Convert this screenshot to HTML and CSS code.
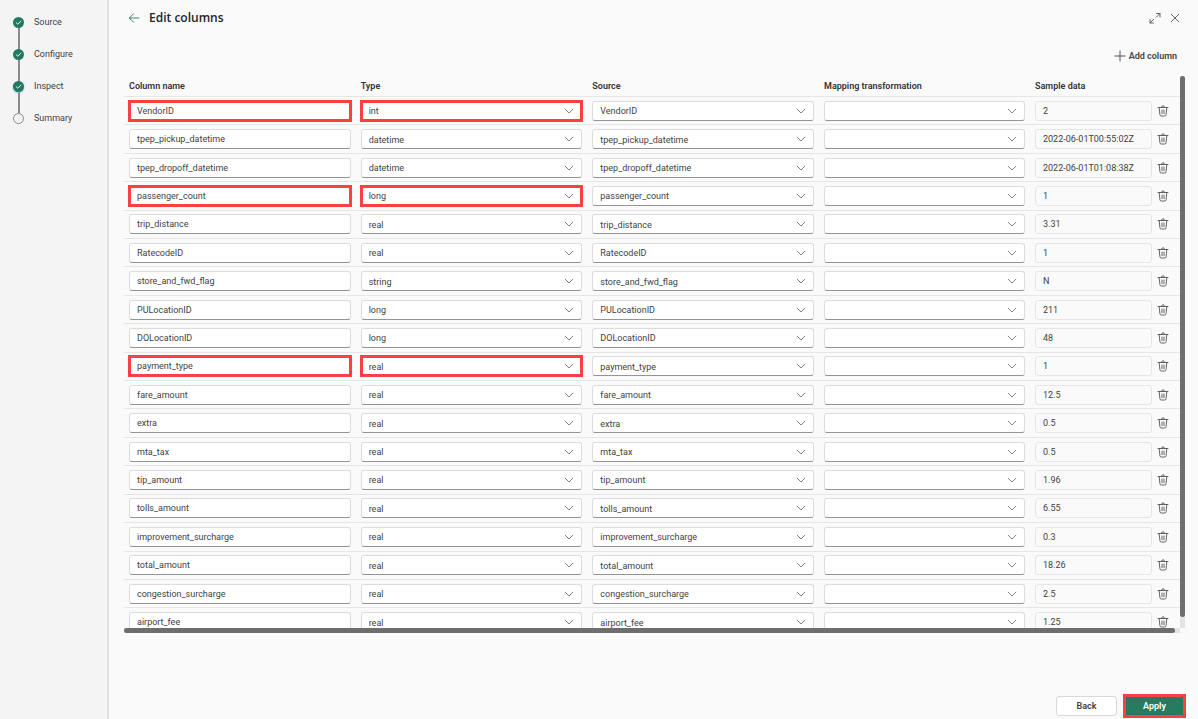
FILE: index.html
```html
<!DOCTYPE html>
<html lang="en">
<head>
<meta charset="utf-8">
<title>Edit columns</title>
<link rel="stylesheet" href="styles.css">
</head>
<body>
<svg class="sprite" aria-hidden="true">
  <symbol id="chevron" viewBox="0 0 10 10"><path d="M1.2 3.2 5 7l3.8-3.8"/></symbol>
  <symbol id="check" viewBox="0 0 11 11"><path d="m3.2 5.7 1.6 1.5 3.1-3.1"/></symbol>
  <symbol id="trash" viewBox="0 0 12 12"><path d="M1 2.5h10M4.5 2.3a1.5 1.5 0 0 1 3 0M2.2 2.7l.7 7c.1.9.6 1.3 1.4 1.3h3.4c.8 0 1.300-.4 1.400-1.300l.7-7M5 5v3.700M7 5v3.700"/></symbol>
</svg>
<div class="app">
  <nav class="steps" aria-label="Progress">
    <ol class="step-list">
      <li class="step"><span class="dot"><svg class="check"><use href="#check"/></svg></span>Source</li>
      <li class="step"><span class="dot"><svg class="check"><use href="#check"/></svg></span>Configure</li>
      <li class="step"><span class="dot dot-current"><svg class="check"><use href="#check"/></svg></span>Inspect</li>
      <li class="step"><span class="dot dot-open"></span>Summary</li>
    </ol>
  </nav>
  <main class="main">
    <header class="header">
      <button class="icon-button back-arrow" aria-label="Go back"><svg class="icon" viewBox="0 0 12 12"><path d="M11 6H1.500M5.500 1.800 1.300 6l4.200 4.200"/></svg></button>
      <h1 class="title">Edit columns</h1>
      <button class="icon-button" aria-label="Expand"><svg class="icon" viewBox="0 0 12 12"><path d="M7.500 1.500h3.500v3.500M11 1.500 7.200 5.300M4.500 11H1V7.500M1 11l3.800-3.800"/></svg></button>
      <button class="icon-button" aria-label="Close"><svg class="icon" viewBox="0 0 12 12"><path d="m2.200 2.200 7.600 7.600M9.800 2.200 2.200 9.800"/></svg></button>
    </header>
    <div class="toolbar">
      <button class="add"><svg class="icon" viewBox="0 0 12 12"><path d="M6 1v10M1 6h10"/></svg>Add column</button>
    </div>
    <section class="viewport">
      <div class="scroll">
        <table class="columns">
          <colgroup><col><col><col><col class="col-mapping"><col class="col-sample"><col class="col-action"></colgroup>
          <thead>
            <tr><th>Column name</th><th>Type</th><th>Source</th><th>Mapping transformation</th><th>Sample data</th><td></td></tr>
          </thead>
          <tbody id="rows"></tbody>
        </table>
      </div>
      <div class="track track-y"><div class="thumb thumb-y"></div></div>
      <div class="track track-x"><div class="thumb thumb-x"></div></div>
    </section>
    <footer class="footer">
      <button class="button">Back</button>
      <button class="button button-primary marked">Apply</button>
    </footer>
  </main>
</div>
<script src="script.js"></script>
</body>
</html>
```
FILE: styles.css
```css
* { box-sizing: border-box; }
body {
  margin: 0;
  font: 9px/12px Roboto, "Open Sans", sans-serif;
  color: #424242;
  background: #fafafa;
}
button, input, select { font: inherit; color: inherit; margin: 0; }
button { border: 0; padding: 0; background: none; }
svg { fill: none; stroke: currentColor; stroke-width: 0.9; stroke-linecap: round; stroke-linejoin: round; }
.sprite { position: absolute; width: 0; height: 0; }

.app { display: flex; height: 100vh; overflow: hidden; }
.steps {
  flex: none;
  width: 109px;
  padding: 6px 13px;
  background: #f4f4f4;
  border-right: 2px solid #e0e0e0;
}
.step-list { margin: 0; padding: 0; list-style: none; }
.step {
  display: flex;
  align-items: center;
  gap: 10px;
  height: 32px;
  background: linear-gradient(#8a8a8a, #8a8a8a) 5px 0 / 2px 100% no-repeat;
}
.step:first-child { background-position: 5px 16px; }
.step:last-child { background-size: 2px 11px; }
.dot {
  display: flex;
  width: 11px;
  height: 11px;
  border-radius: 50%;
  background: #217a5f;
  color: #fff;
}
.dot-current { box-shadow: 0 1px 2px #8ab8e6; }
.dot-open { background: #f4f4f4; border: 1px solid #8a8a8a; }
.check { width: 11px; height: 11px; }

.main { flex: 1; min-width: 0; display: flex; flex-direction: column; padding: 8px 13px 3px 15px; }
.header { display: flex; align-items: center; gap: 8px; height: 19px; padding: 0 4px; }
.title { flex: 1; margin: 0; font: 600 12px/16px "Open Sans", sans-serif; color: #242424; }
.icon-button { display: flex; color: #555; }
.icon { width: 12px; height: 12px; }
.back-arrow { color: #217a5f; margin-right: 1px; }
.toolbar { display: flex; justify-content: flex-end; padding: 21px 8px 12px; }
.add { display: flex; align-items: center; gap: 3px; height: 16px; font-weight: 600; }

.viewport {
  flex: 1;
  min-height: 0;
  display: grid;
  grid-template: minmax(0, 1fr) 5px / minmax(0, 1fr) 5px;
}
.scroll { overflow: hidden; }
.track { background: #e4e4e4; }
.thumb { background: #6e6e6e; border-radius: 3px; }
.thumb-y { height: 98%; }
.thumb-x { margin-right: 5px; height: 100%; }

.columns { width: 100%; height: 561px; table-layout: fixed; border-collapse: separate; border-spacing: 0; }
.columns th, .columns td { padding: 0 5px; border-bottom: 1px solid #e6e6e6; text-align: left; vertical-align: middle; }
.columns thead tr { height: 21px; }
.columns th { font-weight: 600; color: #333; }
.columns td.action { padding: 0; }
.col-mapping { width: 211px; }
.col-sample { width: 127px; }
.col-action { width: 23px; }

.field, .picker-select {
  display: block;
  width: 100%;
  height: 20px;
  padding: 0 7px;
  background: #fff;
  border: 1px solid #dcdcdc;
  border-bottom-color: #949494;
  border-radius: 3px;
}
.field-readonly { background: #fafafa; border-color: #e6e6e6; }
.picker { display: grid; grid-template-columns: minmax(0, 1fr) 18px; align-items: center; }
.picker-select { grid-area: 1 / 1 / 2 / 3; padding-top: 1px; appearance: none; }
.chevron { grid-area: 1 / 2; width: 10px; height: 10px; color: #777; pointer-events: none; }
.delete { display: block; color: #555; }
.trash { display: block; width: 12px; height: 12px; }
.marked { outline: 3px solid #fa4141; outline-offset: -2px; border-radius: 0; }

.footer { display: flex; justify-content: flex-end; align-items: center; gap: 8px; padding: 63px 1px 0 0; }
.button {
  width: 61px;
  height: 20px;
  border: 1px solid #d8d8d8;
  border-radius: 3px;
  background: #fff;
  font-weight: 600;
}
.button-primary { width: 59px; border: 0; border-radius: 0; background: #287a60; color: #fff; outline-offset: -1px; }
```
FILE: script.js
```js
const columns = [
  ["VendorID", "int", "2", true],
  ["tpep_pickup_datetime", "datetime", "2022-06-01T00:55:02Z"],
  ["tpep_dropoff_datetime", "datetime", "2022-06-01T01:08:38Z"],
  ["passenger_count", "long", "1", true],
  ["trip_distance", "real", "3.31"],
  ["RatecodeID", "real", "1"],
  ["store_and_fwd_flag", "string", "N"],
  ["PULocationID", "long", "211"],
  ["DOLocationID", "long", "48"],
  ["payment_type", "real", "1", true],
  ["fare_amount", "real", "12.5"],
  ["extra", "real", "0.5"],
  ["mta_tax", "real", "0.5"],
  ["tip_amount", "real", "1.96"],
  ["tolls_amount", "real", "6.55"],
  ["improvement_surcharge", "real", "0.3"],
  ["total_amount", "real", "18.26"],
  ["congestion_surcharge", "real", "2.5"],
  ["airport_fee", "real", "1.25"]
];

const picker = (label, value, mark = "") => `
  <td><div class="picker">
    <select class="picker-select ${mark}" aria-label="${label}"><option>${value}</option></select>
    <svg class="chevron"><use href="#chevron"/></svg>
  </div></td>`;

document.getElementById("rows").innerHTML = columns.map(([name, type, sample, marked]) => {
  const mark = marked ? "marked" : "";
  return `<tr>
    <td><input class="field ${mark}" aria-label="Column name" value="${name}"></td>
    ${picker("Type of " + name, type, mark)}
    ${picker("Source of " + name, name)}
    ${picker("Mapping transformation of " + name, "")}
    <td><input class="field field-readonly" aria-label="Sample data of ${name}" value="${sample}" readonly></td>
    <td class="action"><button class="delete" aria-label="Delete ${name}"><svg class="trash"><use href="#trash"/></svg></button></td>
  </tr>`;
}).join("");
```
